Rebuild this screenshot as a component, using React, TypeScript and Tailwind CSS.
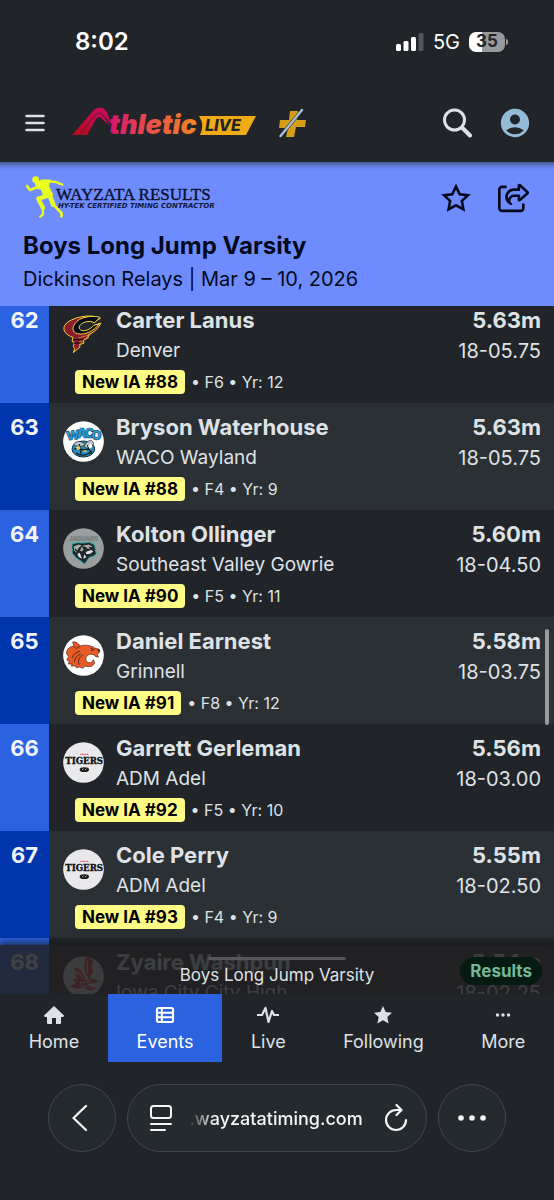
import React from "react";
import { FaRegShareFromSquare } from "react-icons/fa6";
import { MdAccountCircle } from "react-icons/md";

type Team = "denver" | "waco" | "southeast" | "grinnell" | "adm" | "iowacity";

interface Result {
  place: number;
  name: string;
  school: string;
  team: Team;
  mark: string;
  imperial: string;
  record: string;
  flight: string;
  year: number;
}

const results: Result[] = [
  { place: 62, name: "Carter Lanus", school: "Denver", team: "denver", mark: "5.63m", imperial: "18-05.75", record: "New IA #88", flight: "F6", year: 12 },
  { place: 63, name: "Bryson Waterhouse", school: "WACO Wayland", team: "waco", mark: "5.63m", imperial: "18-05.75", record: "New IA #88", flight: "F4", year: 9 },
  { place: 64, name: "Kolton Ollinger", school: "Southeast Valley Gowrie", team: "southeast", mark: "5.60m", imperial: "18-04.50", record: "New IA #90", flight: "F5", year: 11 },
  { place: 65, name: "Daniel Earnest", school: "Grinnell", team: "grinnell", mark: "5.58m", imperial: "18-03.75", record: "New IA #91", flight: "F8", year: 12 },
  { place: 66, name: "Garrett Gerleman", school: "ADM Adel", team: "adm", mark: "5.56m", imperial: "18-03.00", record: "New IA #92", flight: "F5", year: 10 },
  { place: 67, name: "Cole Perry", school: "ADM Adel", team: "adm", mark: "5.55m", imperial: "18-02.50", record: "New IA #93", flight: "F4", year: 9 },
  { place: 68, name: "Zyaire Washpun", school: "Iowa City City High", team: "iowacity", mark: "5.54m", imperial: "18-02.25", record: "New IA #94", flight: "F6", year: 11 },
];

function TeamLogo({ team }: { team: Team }) {
  return (
    <svg viewBox="0 0 123 123" className="size-[41px] shrink-0" aria-hidden="true">
      {team === "denver" && (
        <>
          <path d="M112 13C88 -2 22 8 5 34C-3 49 10 64 30 70L27 82L34 86L31 98L35 104L31 116L51 99L50 92L63 87L61 79L76 71L75 63C92 56 106 44 114 27L96 33C88 49 65 57 47 53C31 47 40 30 60 24C74 20 85 20 91 25Z" fill="#8a1c2b" stroke="#f0d33f" strokeWidth="3" />
          <path d="M111 10C80 2 48 12 37 27C25 43 29 55 43 59C65 64 91 53 108 30L92 34C82 47 63 54 53 48C43 41 50 29 67 24C78 21 88 22 94 27Z" fill="#070b12" stroke="#f0d33f" strokeWidth="3" />
          <path d="M30 77L60 76M33 88L56 86" stroke="#08090b" strokeWidth="3" fill="none" />
          <path d="M46 72L82 62L63 78M48 84L58 82L49 93M36 106L31 116" stroke="#e6a93b" strokeWidth="2" fill="none" />
        </>
      )}
      {team === "waco" && (
        <>
          <circle cx="61.5" cy="61.5" r="61" fill="#fff" />
          <g fontFamily="Inter, sans-serif" fontWeight="900" fontSize="38" fill="#27a5da" stroke="#164b72" strokeWidth="2">
            <text x="10" y="57" transform="rotate(-7 25 50)">W</text>
            <text x="42" y="52">A</text>
            <text x="65" y="52">C</text>
            <text x="86" y="56" transform="rotate(5 98 45)">O</text>
          </g>
          <ellipse cx="61" cy="84" rx="34" ry="24" fill="#268fc0" stroke="#17303e" strokeWidth="3" />
          <path d="M31 70C43 56 58 61 67 71L54 77L38 74ZM62 76C77 51 91 56 92 70L75 83Z" fill="#b8c5cb" stroke="#222" strokeWidth="2" />
          <path d="M34 84L48 80L60 87L80 84M39 96C54 107 75 103 87 91M49 69L54 98M73 73L86 99" fill="none" stroke="#111c23" strokeWidth="4" />
          <path d="M38 79L49 74L53 83L43 87ZM58 91L68 86L72 94Z" fill="#e5c75d" />
          <path d="M75 76L84 67L88 77L81 84Z" fill="#fff" />
        </>
      )}
      {team === "southeast" && (
        <>
          <circle cx="61.5" cy="61.5" r="61" fill="#9b9d9e" />
          <text x="61" y="39" textAnchor="middle" fontFamily="Inter, sans-serif" fontWeight="800" fontSize="18" fill="#687774" stroke="#83928f">JAGUARS</text>
          <path d="M16 45H104" stroke="#5fb3ab" strokeWidth="3" />
          <path d="M27 48L42 44L60 45L79 43L95 50L97 65L100 77L91 85L79 88L65 108L55 100L40 90L28 76Z" fill="#20292b" stroke="#29aaa5" strokeWidth="3" />
          <path d="M30 55L46 48L60 51L48 61L40 77L32 68ZM56 52L78 48L91 56L79 64L66 62L56 72L49 70Z" fill="#a9adad" stroke="#181d1e" strokeWidth="3" />
          <path d="M68 72L84 66L91 70L82 77L70 79M43 78L50 74L57 92L47 87ZM64 79L70 88L61 92Z" fill="#dce1df" />
          <path d="M58 57L67 59L61 63M78 57L86 60M36 63L42 70" fill="none" stroke="#10191a" strokeWidth="4" />
        </>
      )}
      {team === "grinnell" && (
        <>
          <circle cx="61.5" cy="61.5" r="61" fill="#fff" />
          <path d="M29 21C38 19 46 25 51 33C64 28 86 31 95 39L109 43L111 51L103 58L106 66L98 65C94 57 82 55 74 61C65 69 68 82 78 83C85 84 90 80 91 74L95 84L88 93L76 95L65 93L60 100L50 96L40 98L35 92L25 94L27 87L16 87L19 79L11 75L17 65L10 54C12 41 20 34 33 34Z" fill="#e85b26" stroke="#542116" strokeWidth="2" />
          <path d="M33 34L40 41L51 33M27 69C31 57 39 51 51 49M34 81C36 68 43 60 54 57M48 89C44 76 49 66 60 60M82 39L94 44L84 47" fill="none" stroke="#54291d" strokeWidth="3" />
          <path d="M101 43L110 44L107 50Z" fill="#2b2323" />
        </>
      )}
      {team === "adm" && (
        <>
          <circle cx="61.5" cy="61.5" r="61" fill="#e9e9eb" />
          <path d="M52 37H76" stroke="#ce4b58" strokeWidth="3" strokeDasharray="4 1" />
          <text x="63.5" y="65" textAnchor="middle" fontFamily="DejaVu Serif, serif" fontWeight="700" fontSize="26" fill="#111" stroke="#111">TIGERS</text>
          <ellipse cx="64" cy="83" rx="14" ry="7" fill="#171717" />
          <path d="M57 84L62 80M65 85L71 80" stroke="#aaa" strokeWidth="3" />
        </>
      )}
      {team === "iowacity" && (
        <>
          <circle cx="61.5" cy="61.5" r="61" fill="#d7d7d7" />
          <path d="M67 4L79 2L91 14L87 30L91 47L79 70L68 56L63 31ZM31 32L50 39L61 56L70 73L88 67L108 75L94 82L71 83L83 93L102 97L81 104L61 95L43 98L18 91L39 82L28 70L41 69L36 57L47 58L36 45Z" fill="#db3030" />
          <path d="M73 16V49M43 45L61 67M51 81L83 76M54 90L74 93" stroke="#d7d7d7" strokeWidth="3" />
        </>
      )}
    </svg>
  );
}

function StatusBar() {
  return (
    <div className="flex h-[84px] items-center justify-between pl-[75px] pr-[46px] text-white">
      <time className="text-[24px] font-semibold leading-8">8:02</time>
      <div className="flex items-center">
        <svg viewBox="0 0 28 18" className="mr-[9px] h-[18px] w-7" aria-hidden="true">
          <rect x="0" y="11" width="5" height="7" rx="1.5" fill="#fff" />
          <rect x="7.5" y="8" width="5" height="10" rx="1.5" fill="#fff" />
          <rect x="15" y="4" width="5" height="14" rx="1.5" fill="#fff" />
          <rect x="22.5" y="0" width="5" height="18" rx="1.5" fill="#53565a" />
        </svg>
        <span className="mr-[9px] text-[20px] leading-6">5G</span>
        <span className="flex h-5 w-9 items-center justify-center rounded-[7px] bg-linear-to-r from-white from-35% to-[#98999b] to-35% text-[17px] font-bold text-[#212529]">
          35
        </span>
        <span className="ml-px h-[6px] w-[2px] rounded-r bg-[#98999b]" />
      </div>
    </div>
  );
}

function BrandLogo() {
  return (
    <svg viewBox="0 0 184 32" className="h-8 w-[184px] overflow-visible" role="img" aria-label="Athletic Live">
      <defs>
        <linearGradient id="brand" gradientUnits="userSpaceOnUse" x1="38" y1="0" x2="130" y2="0">
          <stop offset="0" stopColor="#dc126f" />
          <stop offset="0.4" stopColor="#e64b4c" />
          <stop offset="1" stopColor="#f58c22" />
        </linearGradient>
        <linearGradient id="peak" x1="0" y1="1" x2="1" y2="0">
          <stop offset="0" stopColor="#b40b20" />
          <stop offset="1" stopColor="#d10a63" />
        </linearGradient>
      </defs>
      <path d="M0 28L20 5Q24 0 30 1Q34 2 36 8L39 17L32 9Q28 4 24 8L8 28Z" fill="url(#peak)" />
      <path d="M8 28L23 9Q28 4 32 10L38 19L30 12Q27 8 24 12L15 28Z" fill="url(#peak)" />
      <path d="M7 28L23 8Q28 3 33 10" fill="none" stroke="#71152b" strokeWidth="0.8" />
      <path d="M127 9H184L174 28H128Q133 18 127 9Z" fill="#f0aa16" />
      <text x="37" y="27" fontFamily="Inter, sans-serif" fontSize="27" fontWeight="900" fontStyle="italic" fill="url(#brand)">
        thletic
      </text>
      <text x="133" y="24" fontFamily="Inter, sans-serif" fontSize="16" fontWeight="800" fontStyle="italic" fill="#212529">
        LIVE
      </text>
    </svg>
  );
}

function Header() {
  return (
    <header className="flex h-[78px] items-center pl-[25px] pr-[23px]">
      <button type="button" aria-label="Menu" className="mr-[27px]">
        <svg viewBox="0 0 20 18" className="h-[18px] w-5" stroke="#dee2e6" strokeWidth="2.5" strokeLinecap="round">
          <path d="M1.5 2H18.5M1.5 9H18.5M1.5 16H18.5" />
        </svg>
      </button>
      <a href="#live">
        <BrandLogo />
      </a>
      <a href="#plus" aria-label="Athletic plus" className="ml-[22px]">
        <svg viewBox="0 0 28 30" className="h-[30px] w-7">
          <path d="M12 3H20L19 12H28L27 19H18L16 29H8L10 20H1L2 12H11Z" fill="#d69d18" />
          <path d="M2.5 28L24 2" stroke="#212529" strokeWidth="3.4" />
          <path d="M2.5 28L24 2" stroke="#a3c4d4" strokeWidth="2.4" strokeLinecap="round" />
        </svg>
      </a>
      <button type="button" aria-label="Search" className="ml-auto mr-[27px]">
        <svg viewBox="0 0 30 30" className="size-[30px]" fill="none" stroke="#dee2e6">
          <circle cx="12.5" cy="12" r="10" strokeWidth="3" />
          <path d="M20 19.5L28 27.5" strokeWidth="4" strokeLinecap="round" />
        </svg>
      </button>
      <button type="button" aria-label="Account">
        <MdAccountCircle className="-m-px size-[34px] text-[#94bcd8]" />
      </button>
    </header>
  );
}

function EventHeader() {
  return (
    <section className="h-36 shrink-0 bg-[#6f8cff] pl-[23px] pr-6 text-[#02091c] shadow-[inset_0_8px_6px_-6px_#39466f]">
      <div className="flex h-[68px] items-center justify-between pt-1">
        <svg viewBox="0 0 200 46" className="h-[46px] w-[200px] overflow-visible" role="img" aria-label="Wayzata Results">
          <g transform="translate(-3 -3) scale(0.333)" fill="none" stroke="#eaff1c" strokeLinecap="round" strokeLinejoin="round">
            <circle cx="47" cy="23" r="10" fill="#eaff1c" stroke="none" />
            <path d="M54 45L30 54L21 42" strokeWidth="8" />
            <path d="M85 28L108 30L127 38" strokeWidth="7" />
            <path d="M47 35L66 25L90 25L84 42L97 68L74 77L65 52L53 48Z" fill="#eaff1c" strokeWidth="5" />
            <path d="M82 72L55 80L69 108" strokeWidth="13" />
            <path d="M68 104L69 127L61 134" strokeWidth="7" />
            <path d="M90 72L100 98" strokeWidth="14" />
            <path d="M100 98L125 124L124 133" strokeWidth="8" />
          </g>
          <text x="33" y="25" fontFamily="Liberation Serif, serif" fontSize="17" fill="#0b1130" stroke="#0b1130" strokeWidth="0.4">
            WAYZATA RESULTS
          </text>
          <text x="35" y="33" fontFamily="DejaVu Sans, sans-serif" fontSize="7" fontWeight="700" fontStyle="italic" fill="#11183a">
            HY-TEK CERTIFIED TIMING CONTRACTOR
          </text>
        </svg>
        <div className="flex items-center gap-[27px]">
          <button type="button" aria-label="Follow event">
            <svg viewBox="0 0 30 30" className="size-[30px]" fill="none" stroke="currentColor" strokeWidth="2.6">
              <path d="M15 3.5L18.7 11.2L27 12.2L20.9 17.9L22.4 26.3L15 22.3L7.6 26.3L9.1 17.9L3 12.2L11.3 11.2Z" />
            </svg>
          </button>
          <button type="button" aria-label="Share">
            <FaRegShareFromSquare className="size-8" />
          </button>
        </div>
      </div>
      <h1 className="text-[24px] font-bold leading-8">Boys Long Jump Varsity</h1>
      <p className="text-[20px] leading-[34px]">Dickinson Relays | Mar 9 – 10, 2026</p>
    </section>
  );
}

function ResultRow({ result }: { result: Result }) {
  return (
    <tr className="group bg-[#212529] even:bg-[#2b3035]">
      <td className="w-[49px] bg-[#2b62e0] pt-2 text-center align-top text-[22px] font-bold leading-8 text-[#f1f4fa] group-even:bg-[#0035ad]">
        {result.place}
      </td>
      <td className="p-0 pb-[9px] pt-2 align-top">
        <div className="flex gap-3 pl-[14px]">
          <div className="pt-[10px]">
            <TeamLogo team={result.team} />
          </div>
          <div className="whitespace-nowrap">
            <div className="text-[22px] font-bold leading-8">{result.name}</div>
            <div className="text-[19px] leading-[30px]">{result.school}</div>
          </div>
        </div>
        <div className="mt-1 flex h-6 items-center gap-[6px] whitespace-nowrap pl-[26px] text-[16px]">
          <span className="rounded-[4px] bg-[#fffc85] px-[7px] text-[17px] font-bold leading-6 text-black">{result.record}</span>
          <span>• {result.flight} • Yr: {result.year}</span>
        </div>
      </td>
      <td className="w-[110px] pr-[13px] pt-2 text-right align-top">
        <div className="text-[22px] font-bold leading-8">{result.mark}</div>
        <div className="text-[20px] leading-[30px]">{result.imperial}</div>
      </td>
    </tr>
  );
}

function ResultsList() {
  return (
    <main className="relative min-h-0 flex-1 overflow-hidden">
      <table className="-mt-[10px] w-full table-fixed border-collapse">
        <tbody>
          {results.map((result) => (
            <ResultRow key={result.place} result={result} />
          ))}
        </tbody>
      </table>
      <div className="absolute right-[5px] top-[323px] h-24 w-1 rounded-full bg-[#999b9e]" />
      <div className="absolute inset-x-0 bottom-0 h-[49px] bg-[#212123]/85 shadow-[0_-3px_7px_#15171ab0]">
        <div className="mx-auto mt-3 h-[3px] w-1/4 rounded-full bg-[#56575a]" />
        <h2 className="mt-[3px] text-center text-[17px] leading-6">Boys Long Jump Varsity</h2>
        <button type="button" className="absolute right-3 top-3 rounded-full bg-[#051b11] px-[10px] text-[17px] font-bold leading-7 text-[#75b798]">
          Results
        </button>
      </div>
    </main>
  );
}

const navItems = [
  { label: "Home", icon: <path d="M10 1L20 10.5Q20 12 18.5 12H17V18Q17 19 16 19H12V13H8V19H4Q3 19 3 18V12H1.5Q0 12 0 10.5Z" fill="currentColor" /> },
  {
    label: "Events",
    active: true,
    icon: (
      <>
        <rect x="2" y="3" width="16" height="14" rx="1.5" fill="none" stroke="currentColor" strokeWidth="2.2" />
        <path d="M2 7.7H18M2 12.3H18M6.8 3V17" stroke="currentColor" strokeWidth="2" />
      </>
    ),
  },
  { label: "Live", icon: <path d="M-1 10H4L7.5 3L10.5 17L14 6L16 10H21" fill="none" stroke="currentColor" strokeWidth="2.2" strokeLinejoin="round" /> },
  { label: "Following", icon: <path d="M10 1L12.7 7L19 7.7L14.3 12L15.6 18.5L10 15.3L4.4 18.5L5.7 12L1 7.7L7.3 7Z" fill="currentColor" /> },
  {
    label: "More",
    icon: (
      <g fill="currentColor">
        <circle cx="4.5" cy="10" r="1.7" />
        <circle cx="10" cy="10" r="1.7" />
        <circle cx="15.5" cy="10" r="1.7" />
      </g>
    ),
  },
];

function BottomNav() {
  return (
    <nav className="flex h-[68px]">
      {navItems.map((item) => (
        <a
          key={item.label}
          href={`#${item.label.toLowerCase()}`}
          className={`flex flex-auto flex-col items-center pt-[11px] ${item.active ? "bg-[#2b62e0] text-white" : ""}`}
        >
          <svg viewBox="0 0 20 20" className="h-5 w-5 overflow-visible" aria-hidden="true">
            {item.icon}
          </svg>
          <span className="mt-[5px] text-[18px] leading-6">{item.label}</span>
        </a>
      ))}
    </nav>
  );
}

function BrowserBar() {
  return (
    <div className="flex gap-[11px] px-12 pb-12 pt-[22px] text-[#f4f5f6]">
      <button type="button" aria-label="Back" className="flex size-[68px] shrink-0 items-center justify-center rounded-full border border-[#42464e] bg-[#252a2e]">
        <svg viewBox="0 0 20 28" className="h-7 w-5" fill="none" stroke="currentColor" strokeWidth="2.3" strokeLinecap="round" strokeLinejoin="round">
          <path d="M14 2L1.5 14L14 26" />
        </svg>
      </button>
      <div className="flex min-w-0 flex-1 items-center rounded-full border border-[#42464e] bg-[#252a2e] pl-[22px] pr-[18px]">
        <button type="button" aria-label="Page settings">
          <svg viewBox="0 0 22 28" className="h-7 w-[22px]" fill="none" stroke="currentColor" strokeWidth="2" strokeLinecap="round">
            <rect x="1" y="2" width="20" height="12" rx="2.5" />
            <path d="M1 20H21M1 26H15" />
          </svg>
        </button>
        <input
          aria-label="Address"
          defaultValue=".wayzatatiming.com"
          className="ml-4 mr-5 min-w-0 flex-1 bg-transparent text-center text-[18px] font-medium outline-none mask-l-from-85% mask-l-to-100%"
        />
        <button type="button" aria-label="Reload">
          <svg viewBox="0 0 24 28" className="h-7 w-6" fill="none" stroke="currentColor" strokeWidth="2.2" strokeLinecap="round" strokeLinejoin="round">
            <path d="M16.5 6H12A10 10 0 1 0 22 16M12.5 1L17.5 6L12.5 11" />
          </svg>
        </button>
      </div>
      <button type="button" aria-label="More options" className="flex size-[68px] shrink-0 items-center justify-center rounded-full border border-[#42464e] bg-[#252a2e]">
        <svg viewBox="0 0 28 6" className="h-[6px] w-7" fill="currentColor">
          <circle cx="3" cy="3" r="2.8" />
          <circle cx="14" cy="3" r="2.8" />
          <circle cx="25" cy="3" r="2.8" />
        </svg>
      </button>
    </div>
  );
}

export default function App() {
  return (
    <div className="flex h-screen flex-col bg-[#212529] font-[Inter,sans-serif] text-[#dee2e6]">
      <StatusBar />
      <Header />
      <EventHeader />
      <ResultsList />
      <BottomNav />
      <BrowserBar />
    </div>
  );
}
